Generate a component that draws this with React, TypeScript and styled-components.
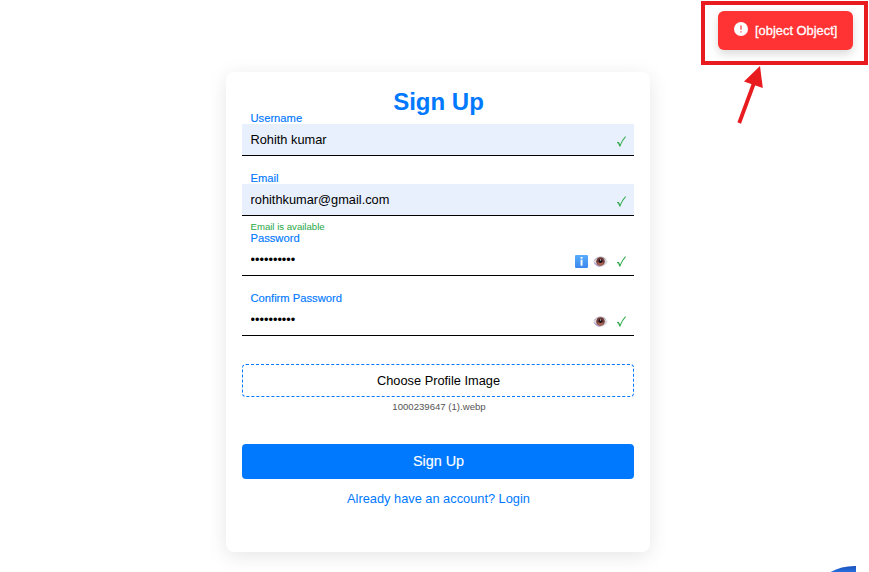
import React from "react";
import styled, { createGlobalStyle } from "styled-components";

const BLUE = "#0079ff";

const GlobalStyle = createGlobalStyle`
  * { box-sizing: border-box; }
  html, body { margin: 0; padding: 0; background: #fff; overflow: hidden; }
  body, input, button { font-family: "Liberation Sans", Arial, sans-serif; }
`;

const Page = styled.main`
  position: relative;
  width: 100%;
  height: 572px;
  overflow: hidden;
  padding: 72px 0 0 226px;
`;

const Card = styled.form`
  width: 424px;
  height: 480px;
  padding: 16px;
  border-radius: 8px;
  background: #fff;
  box-shadow: 0 4px 20px rgba(0, 0, 0, 0.1);
  display: flex;
  flex-direction: column;
`;

const Title = styled.h2`
  margin: 0;
  height: 24px;
  padding-left: 1px;
  line-height: 28px;
  font-size: 24px;
  font-weight: 700;
  text-align: center;
  color: ${BLUE};
`;

const Field = styled.div`
  height: 60px;
  flex: none;
`;

const Label = styled.label`
  display: block;
  height: 12px;
  padding-left: 8.5px;
  font-size: 11.2px;
  line-height: 13px;
  color: ${BLUE};
  -webkit-text-stroke: 0.15px ${BLUE};
`;

const InputRow = styled.div<{ $filled?: boolean }>`
  display: flex;
  align-items: center;
  height: 32px;
  padding: 0 6px 0 8.5px;
  background: ${(p) => (p.$filled ? "#e8f0fe" : "transparent")};
  border-bottom: 1px solid #000;
`;

const Input = styled.input`
  flex: 1;
  min-width: 0;
  height: 31px;
  padding: 0;
  border: 0;
  outline: 0;
  background: transparent;
  font-size: 12.8px;
  color: #000;
`;

const Icons = styled.div`
  display: flex;
  align-items: center;
  padding-top: 4px;

  svg { display: block; }
  svg + svg { margin-left: 5px; }
  svg:last-child:not(:first-child) { margin-left: 8px; }
`;

const Hint = styled.div`
  height: 16px;
  padding: 5px 0 0 8.5px;
  font-size: 9.6px;
  line-height: 12px;
  color: #28a745;
`;

const Upload = styled.label`
  height: 33px;
  margin-top: 12px;
  flex: none;
  padding-left: 1px;
  border: 1px dashed ${BLUE};
  border-radius: 4px;
  font-size: 12.8px;
  line-height: 31px;
  text-align: center;
  color: #000;
`;

const FileName = styled.div`
  height: 47px;
  flex: none;
  padding: 4px 0 0 2px;
  font-size: 9.6px;
  line-height: 12px;
  text-align: center;
  color: #555;
`;

const Submit = styled.button`
  height: 35px;
  flex: none;
  padding: 0 0 0 1px;
  border: 0;
  border-radius: 4px;
  background: ${BLUE};
  color: #fff;
  font-size: 14.4px;
  line-height: 35px;
  -webkit-text-stroke: 0.15px #fff;
`;

const LoginLink = styled.a`
  margin-top: 12px;
  padding-left: 1px;
  font-size: 12.8px;
  line-height: 16px;
  text-align: center;
  color: ${BLUE};
`;

const Toast = styled.div`
  position: absolute;
  left: 718px;
  top: 11px;
  width: 135px;
  height: 39px;
  padding-left: 16px;
  display: flex;
  align-items: center;
  gap: 7px;
  border-radius: 6px;
  background: #ff3333;
  box-shadow: 0 4px 10px rgba(0, 0, 0, 0.15);
  color: #fff;
  font-size: 12.9px;
  white-space: nowrap;
  -webkit-text-stroke: 0.3px #fff;

  svg { flex: none; margin-top: -3px; }
`;

const Highlight = styled.div`
  position: absolute;
  left: 701px;
  top: 1px;
  width: 167px;
  height: 64px;
  border: 4px solid #e81b1e;
`;

const Pointer = styled.svg`
  position: absolute;
  left: 730px;
  top: 60px;
`;

const Bubble = styled.svg`
  position: absolute;
  left: 821px;
  top: 560px;
`;

const Check = () => (
  <svg width="12" height="12" viewBox="0 0 12 12">
    <path d="M1.1 6.6 2.6 6.5 4 9.6C5.7 5.8 7.3 3 9.6.7" fill="none" stroke="#34ad50" strokeWidth="1.1" />
    <path d="M2 6.8 3.3 10.2 4.3 10.2 4.5 8.8Z" fill="#34ad50" />
  </svg>
);

const Eye = () => (
  <svg width="15" height="12" viewBox="0 0 15 12">
    <path d="M.2 5.8C2 2.2 4.7.6 7.6.6c3.2 0 5.4 1.9 7.1 5.2-1.6 3.3-4 5-7.1 5S2 9.1.2 5.8Z" fill="#dddbe0" />
    <path d="M.5 6C2 9.2 4.6 11.2 8 10.9L4.8 8.9Z" fill="#ab94c4" />
    <path d="M1.2 4.4C4 .8 8.6-.1 12.6 3.2" fill="none" stroke="#a59ba3" strokeWidth=".8" />
    <circle cx="7.5" cy="5.5" r="4.3" fill="#743c3a" />
    <path d="M4 6.7a3.7 3.7 0 0 0 7 0L7.5 6Z" fill="#a8604f" />
    <circle cx="7.5" cy="4.9" r="2" fill="#1f131b" />
    <circle cx="7.6" cy="4" r=".65" fill="#e3d8dc" />
  </svg>
);

const Info = () => (
  <svg width="13" height="13" viewBox="0 0 13 13">
    <defs>
      <linearGradient id="info-fill" x1="0" y1="0" x2="0" y2="1">
        <stop stopColor="#58adfb" />
        <stop offset="1" stopColor="#3c87ed" />
      </linearGradient>
    </defs>
    <rect width="13" height="13" rx="1.2" fill="url(#info-fill)" />
    <rect x="5.6" y="2" width="1.9" height="1.7" fill="#fff" />
    <rect x="5.6" y="4.7" width="1.9" height="6" fill="#fff" />
  </svg>
);

export default function App() {
  return (
    <>
      <GlobalStyle />
      <Page>
        <Card>
          <Title>Sign Up</Title>
          <Field>
            <Label htmlFor="username">Username</Label>
            <InputRow $filled>
              <Input id="username" defaultValue="Rohith kumar" />
              <Icons><Check /></Icons>
            </InputRow>
          </Field>
          <Field>
            <Label htmlFor="email">Email</Label>
            <InputRow $filled>
              <Input id="email" defaultValue="rohithkumar@gmail.com" />
              <Icons><Check /></Icons>
            </InputRow>
            <Hint>Email is available</Hint>
          </Field>
          <Field>
            <Label htmlFor="password">Password</Label>
            <InputRow>
              <Input id="password" type="password" defaultValue="rohith1234" />
              <Icons><Info /><Eye /><Check /></Icons>
            </InputRow>
          </Field>
          <Field>
            <Label htmlFor="confirm">Confirm Password</Label>
            <InputRow>
              <Input id="confirm" type="password" defaultValue="rohith1234" />
              <Icons><Eye /><Check /></Icons>
            </InputRow>
          </Field>
          <Upload>Choose Profile Image</Upload>
          <FileName>1000239647 (1).webp</FileName>
          <Submit type="button">Sign Up</Submit>
          <LoginLink>Already have an account? Login</LoginLink>
        </Card>
        <Toast>
          <svg width="14" height="14" viewBox="0 0 14 14">
            <circle cx="7" cy="7" r="7" fill="#fff" />
            <path d="M7 3.5v4.2M7 9.2v1.4" stroke="#ff3333" strokeWidth="1.2" />
          </svg>
          [object Object]
        </Toast>
        <Highlight />
        <Pointer width="36" height="66" viewBox="0 0 36 66">
          <path d="M9.2 63 24 23" stroke="#e81b1e" strokeWidth="3.8" fill="none" />
          <path d="M30 6 14 21.5 32.8 28Z" fill="#e81b1e" />
        </Pointer>
        <Bubble width="35" height="12" viewBox="0 0 35 12">
          <defs>
            <linearGradient id="bubble-fill" x1="0" y1="0" x2="0" y2="1">
              <stop offset=".2" stopColor="#1d56c0" />
              <stop offset="1" stopColor="#2670e0" />
            </linearGradient>
          </defs>
          <path d="M9.5 12C17 7.8 25.5 5.8 35 6v6Z" fill="url(#bubble-fill)" />
        </Bubble>
      </Page>
    </>
  );
}
